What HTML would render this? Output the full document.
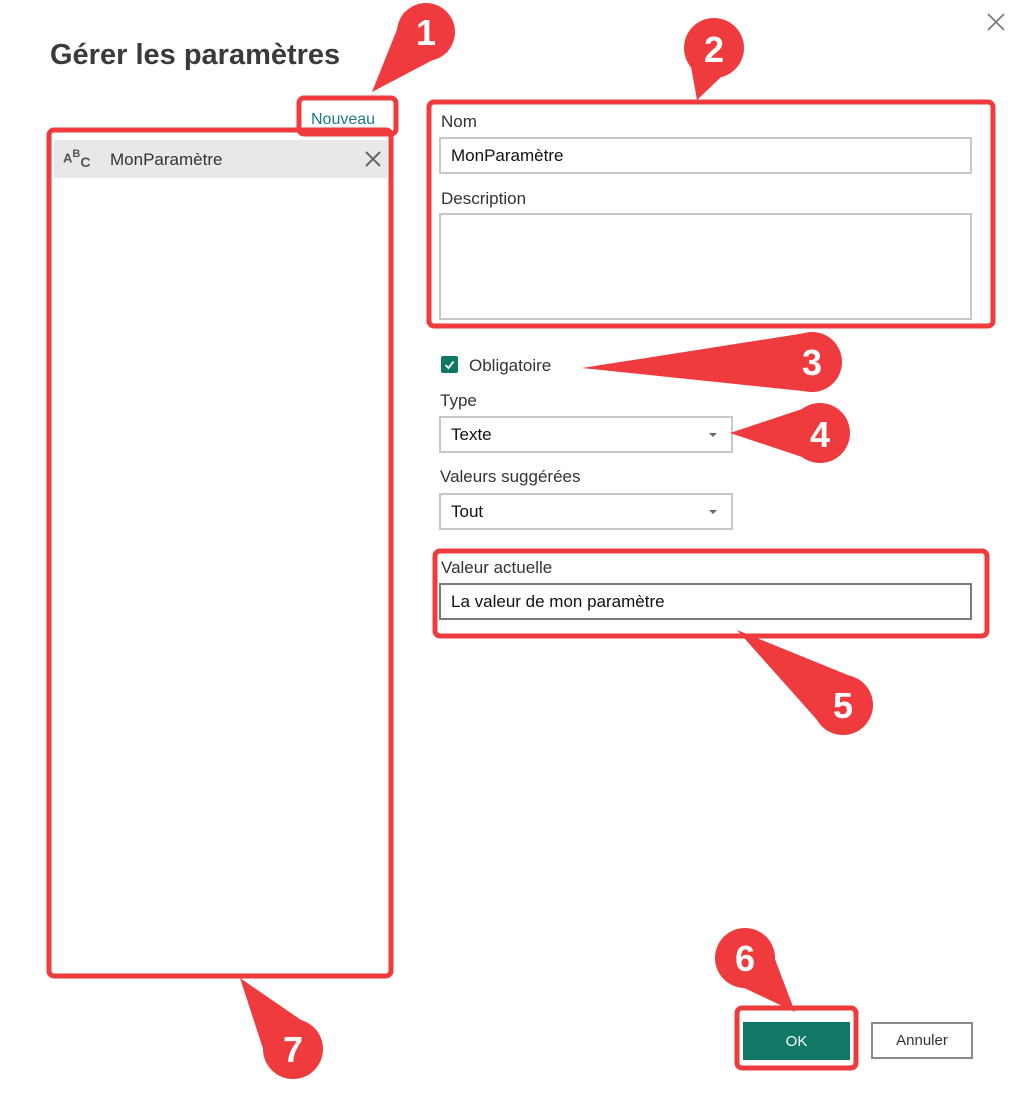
<!DOCTYPE html>
<html><head><meta charset="utf-8"><style>
*{margin:0;padding:0;box-sizing:border-box}
body{width:1024px;height:1109px;background:#fff;position:relative;overflow:hidden;font-family:"Liberation Sans",sans-serif;color:#252525}
.a{position:absolute;white-space:nowrap}
.lbl{font-size:17px;color:#333}
.inp{position:absolute;border:2px solid #c8c8c8;background:#fff;font-size:17px;padding-left:10px;display:flex;align-items:center;color:#111}
.arrow{position:absolute;right:14px;top:15px;width:0;height:0;border-left:4px solid transparent;border-right:4px solid transparent;border-top:4px solid #666}
</style></head><body>
<div class="a" style="left:50px;top:39px;font-size:29px;font-weight:bold;color:#3a3a3a">Gérer les paramètres</div>
<svg class="a" style="left:986px;top:12px" width="20" height="20"><path d="M2 2L18 18M18 2L2 18" stroke="#777" stroke-width="1.6"/></svg>
<div class="a" style="left:311px;top:111px;font-size:16px;color:#1c7a8c">Nouveau</div>
<div class="a" style="left:54px;top:140px;width:333px;height:38px;background:#e8e8e8"></div>
<div class="a" style="left:63px;top:148px;font-size:13px;color:#555;font-weight:bold">A<sup style="font-size:11px">B</sup><span style="font-size:14px;position:relative;top:5px">C</span></div>
<div class="a" style="left:110px;top:150px;font-size:17px;color:#333">MonParamètre</div>
<svg class="a" style="left:364px;top:150px" width="18" height="18"><path d="M2 2L16 16M16 2L2 16" stroke="#666" stroke-width="2"/></svg>

<div class="a lbl" style="left:441px;top:112px">Nom</div>
<div class="inp" style="left:439px;top:137px;width:533px;height:37px">MonParamètre</div>
<div class="a lbl" style="left:441px;top:189px">Description</div>
<div class="inp" style="left:439px;top:213px;width:533px;height:107px"></div>
<div class="a" style="left:441px;top:356px;width:17px;height:17px;background:#117865;border-radius:2px"></div>
<svg class="a" style="left:441px;top:356px" width="17" height="17"><path d="M4.5 9L7.5 12L12.5 5.5" stroke="#fff" stroke-width="1.8" fill="none"/></svg>
<div class="a lbl" style="left:469px;top:356px">Obligatoire</div>
<div class="a lbl" style="left:440px;top:391px">Type</div>
<div class="inp" style="left:439px;top:416px;width:294px;height:37px">Texte<span class="arrow"></span></div>
<div class="a lbl" style="left:440px;top:467px">Valeurs suggérées</div>
<div class="inp" style="left:439px;top:493px;width:294px;height:37px">Tout<span class="arrow"></span></div>
<div class="a lbl" style="left:441px;top:558px">Valeur actuelle</div>
<div class="inp" style="left:439px;top:583px;width:533px;height:37px;border-color:#7a7a7a">La valeur de mon paramètre</div>

<div class="a" style="left:743px;top:1022px;width:107px;height:38px;background:#117865;color:#fff;font-size:15px;display:flex;align-items:center;justify-content:center">OK</div>
<div class="a" style="left:871px;top:1022px;width:102px;height:37px;border:2px solid #8a8a8a;font-size:15px;display:flex;align-items:center;justify-content:center;color:#333">Annuler</div>

<svg class="a" style="left:0;top:0" width="1024" height="1109">
<g fill="none" stroke="#ef3b3e" stroke-width="5">
<rect x="299" y="98" width="97" height="36" rx="5"/>
<rect x="429" y="102" width="564" height="224" rx="5"/>
<rect x="435" y="551" width="552" height="85" rx="5"/>
<rect x="737" y="1008" width="119" height="60" rx="5"/>
<rect x="49" y="130" width="342" height="846" rx="5"/>
</g>
<g fill="#ef3b3e">
<circle cx="426" cy="32" r="29"/><polygon points="372,92 448,52 404,12"/>
<circle cx="714" cy="48" r="30"/><polygon points="697,100 742,57 686,39"/>
<circle cx="812" cy="362" r="30"/><polygon points="582,368 812,392 812,332"/>
<circle cx="820" cy="433" r="30"/><polygon points="730,433 820,463 820,403"/>
<circle cx="843" cy="705" r="30"/><polygon points="737,630 860,680 826,730"/>
<circle cx="745" cy="958" r="30"/><polygon points="795,1012 767,938 723,978"/>
<circle cx="293" cy="1049" r="30"/><polygon points="240,978 317,1031 269,1067"/>
</g>
<g fill="#fff" font-family="Liberation Sans,sans-serif" font-weight="bold" font-size="36" text-anchor="middle">
<text x="426" y="45">1</text><text x="714" y="62">2</text><text x="812" y="375">3</text><text x="820" y="447">4</text><text x="843" y="718">5</text><text x="745" y="971">6</text><text x="293" y="1062">7</text>
</g>
</svg>
</body></html>
